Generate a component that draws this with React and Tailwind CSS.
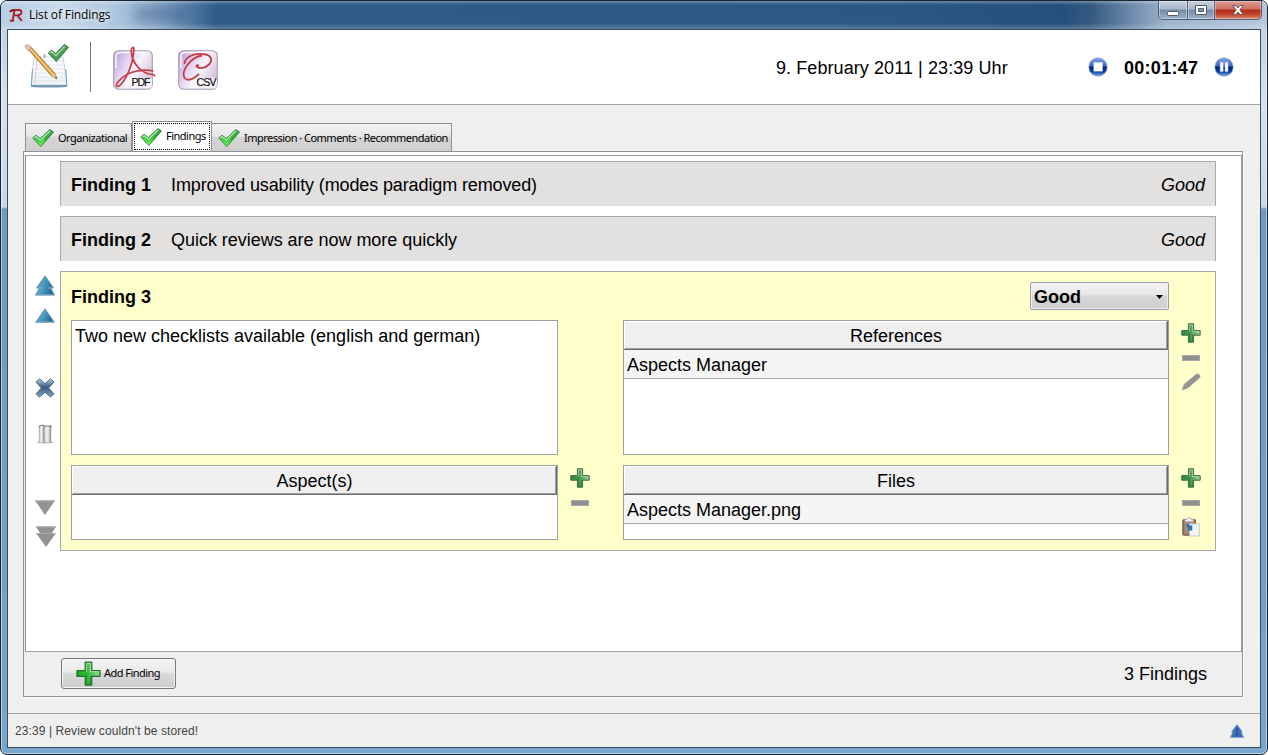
import React from "react";

function Check({ className }) {
  return (
    <svg className={className + " shrink-0"} viewBox="0 0 22 18">
      <defs>
        <linearGradient id="ck" x1="0" y1="0" x2="0" y2="1">
          <stop offset="0" stopColor="#4f9a57" />
          <stop offset="0.45" stopColor="#46b84a" />
          <stop offset="1" stopColor="#5dff52" />
        </linearGradient>
      </defs>
      <path d="M0.8 9 L4 6.2 L8.3 9.6 L17.8 0.6 L21.6 3 L8.8 17.6 Z" fill="url(#ck)" stroke="#1f7a2b" strokeWidth="0.8" strokeLinejoin="round" />
      <path d="M2.2 8.9 L4 7.5 L8.4 11.1 L17.9 2" fill="none" stroke="#c6f5c3" strokeWidth="1.1" opacity="0.9" />
      <path d="M13 9.5 L20.4 3.3 L12.8 12.2Z" fill="#168a1d" opacity="0.55" />
    </svg>
  );
}

function Plus({ className, bright }) {
  return (
    <svg className={className} viewBox="0 0 20 20">
      <defs>
        <linearGradient id={bright ? "pa" : "pb"} x1="0" y1="0.6" x2="1" y2="0.4">
          <stop offset="0" stopColor={bright ? "#13b012" : "#2e8a3a"} />
          <stop offset="0.45" stopColor={bright ? "#35bd38" : "#48974f"} />
          <stop offset="1" stopColor={bright ? "#92dd93" : "#a4cfa2"} />
        </linearGradient>
      </defs>
      <path d="M7.4 0.8 H12.6 V7.6 H19.2 V12.2 H12.6 V19.2 H7.4 V12.2 H0.8 V7.6 H7.4Z" fill={bright ? "url(#pa)" : "url(#pb)"} stroke={bright ? "#2a6b36" : "#3d6c41"} strokeWidth="1" strokeLinejoin="round" />
      <path d="M8.4 8.5 V1.9 H11.6 V8.5 H18" fill="none" stroke="#c2ecc0" strokeWidth="0.8" opacity="0.7" />
      <path d="M8.4 9.4 V18 H11.5 V12" fill="none" stroke="#107a20" strokeWidth="1" opacity="0.5" />
    </svg>
  );
}

function Minus({ className }) {
  return (
    <svg className={className} viewBox="0 0 18 6">
      <rect x="0.5" y="0.5" width="17" height="5" fill="#909090" stroke="#a5a5a5" />
    </svg>
  );
}

function Notepad() {
  return (
    <svg className="h-[46px] w-[46px]" viewBox="0 0 46 46">
      <defs>
        <linearGradient id="np" x1="0" y1="0" x2="0" y2="1">
          <stop offset="0" stopColor="#ffffff" />
          <stop offset="1" stopColor="#eef2f8" />
        </linearGradient>
      </defs>
      <path d="M10 13 H39 L43 41 H7Z" fill="url(#np)" stroke="#b6c7d6" strokeWidth="0.8" />
      <path d="M7 41 H43 V43 Q25 44 7 43Z" fill="#7298b3" />
      <path d="M8.5 25 L7.4 42 M41.8 25 L42.8 42" stroke="#6aa5c5" strokeWidth="1" />
      <path d="M11 17H39M10.5 21H40M10 25H40M9.5 29H41M9 33H41M9 37H41" stroke="#dcdfe9" strokeWidth="0.8" />
      <path d="M13 13 L11 40" stroke="#eab6c4" strokeWidth="0.8" />
      <path d="M20.5 10v4" stroke="#9ba3aa" strokeWidth="1.4" />
      <path d="M3.5 4.5 L6.5 2.5 L31 29.5 L33 35 L28 32.5Z" fill="#dba241" stroke="#8f631e" strokeWidth="0.7" />
      <path d="M5.5 4 L29.5 31" stroke="#ffe09a" strokeWidth="1.1" />
      <path d="M27.5 32.5 L31 29.5 L33 35Z" fill="#e8c79a" />
      <path d="M31 33 L32 32.2 L33.2 35.2Z" fill="#3b2c1c" />
      <path d="M1 3 Q1 0.3 4 0.7 L7.5 3.7 L4.2 6.7Z" fill="#efc3b1" stroke="#a28b82" strokeWidth="0.7" />
      <path d="M24.3 9 L27.6 6.3 L31.8 9.6 L40.2 0.6 L44.5 3.3 L32.3 17.6Z" fill="#4d9e57" stroke="#286c34" strokeWidth="0.9" strokeLinejoin="round" />
      <path d="M26 9 L27.8 7.8 L32 11.6 L40.6 2.4" fill="none" stroke="#b4dcb5" strokeWidth="1.2" />
    </svg>
  );
}

function DocTile({ label, children }) {
  return (
    <svg className="h-[46px] w-[46px]" viewBox="0 0 46 46">
      <defs>
        <linearGradient id="tile" x1="0" y1="0" x2="1" y2="0.5">
          <stop offset="0" stopColor="#b897d8" />
          <stop offset="0.35" stopColor="#e0cfee" />
          <stop offset="0.65" stopColor="#f8f4fa" />
          <stop offset="1" stopColor="#d9c6e2" />
        </linearGradient>
      </defs>
      <rect x="2.7" y="5.7" width="38.6" height="38.6" rx="5" fill="url(#tile)" stroke="#a79ab0" strokeWidth="1.1" />
      <path d="M5 23 V11 Q5 7.5 9 7.5 H34" fill="none" stroke="#fff" strokeWidth="1.5" opacity="0.9" />
      <path d="M14 43 L16 33 H41 V40 Q41 43.5 38 43.5Z" fill="#fff" opacity="0.75" />
      {children}
      <text x="20.5" y="41" fontFamily="Liberation Sans, Arial, sans-serif" fontSize="10.5" textLength={label === "PDF" ? 19 : 20} fill="#111" stroke="#111" strokeWidth="0.2">{label}</text>
    </svg>
  );
}

function Orb({ kind }) {
  return (
    <svg className="h-5 w-5" viewBox="0 0 20 20">
      <defs>
        <linearGradient id="orb" x1="0" y1="0" x2="0" y2="1">
          <stop offset="0" stopColor="#87a7e4" />
          <stop offset="0.45" stopColor="#3a63c4" />
          <stop offset="0.5" stopColor="#05256f" />
          <stop offset="0.75" stopColor="#0a3c9e" />
          <stop offset="1" stopColor="#7db4f5" />
        </linearGradient>
      </defs>
      <circle cx="10" cy="10" r="9.2" fill="url(#orb)" stroke="#7e9ad0" strokeWidth="0.6" />
      {kind === "stop" ? (
        <rect x="5.6" y="5.4" width="9" height="9" fill="#fff" />
      ) : (
        <path d="M6.2 5.2h3v9.4h-3zM11 5.2h3v9.4h-3z" fill="#fff" stroke="#b8c9ee" strokeWidth="0.5" />
      )}
    </svg>
  );
}

function Up({ double, className }) {
  return (
    <svg className={className} viewBox={double ? "0 0 20 21" : "0 0 20 15"}>
      <defs>
        <linearGradient id="upg" x1="0" y1="0" x2="1" y2="0.4">
          <stop offset="0" stopColor="#7899a7" />
          <stop offset="0.5" stopColor="#4d9fc4" />
          <stop offset="1" stopColor="#286a98" />
        </linearGradient>
      </defs>
      <path
        d={double ? "M10 0.8 L18.6 13 H15.6 L19.5 20 H0.5 L4.4 13 H1.4Z" : "M10 0.8 L19.3 14.2 H0.7Z"}
        fill="url(#upg)" stroke="#6793ad" strokeWidth="0.9" />
      <path d={double ? "M0.5 20H19.5M2 13H7M13 13H18" : "M0.5 14.2H19.5"} stroke="#8faac5" strokeWidth="1" />
    </svg>
  );
}

function Down({ double, className }) {
  return (
    <svg className={className} viewBox={double ? "0 0 20 21" : "0 0 20 15"}>
      <path d={double ? "M0 0.5H20L16 7H20L10 21L0 7H4Z" : "M0 0.5H20L10 15Z"} fill="#929292" />
      <path d={double ? "M0 1H20M1 7.5H19" : "M0 1H20"} stroke="#aaaaaa" strokeWidth="1" />
    </svg>
  );
}

function Cross() {
  return (
    <svg className="h-5 w-5" viewBox="0 0 20 20">
      <defs>
        <linearGradient id="xg" x1="0" y1="0" x2="0" y2="1">
          <stop offset="0" stopColor="#c3d6e3" />
          <stop offset="0.45" stopColor="#35587c" />
          <stop offset="1" stopColor="#86a8c6" />
        </linearGradient>
      </defs>
      <path d="M4.5 0.9 L10 5.6 L15.5 0.9 L19 4.1 L13.6 10 L19 15.8 L15.5 19 L10 14.3 L4.5 19 L1 15.8 L6.4 10 L1 4.1Z" fill="url(#xg)" stroke="#476985" strokeWidth="1" strokeLinejoin="round" />
    </svg>
  );
}

function Bin() {
  return (
    <svg className="h-5 w-[18px]" viewBox="0 0 18 20">
      <defs>
        <linearGradient id="bin" x1="0" y1="0" x2="1" y2="0">
          <stop offset="0" stopColor="#9b9b9b" />
          <stop offset="0.2" stopColor="#fff" />
          <stop offset="0.4" stopColor="#9a9a9a" />
          <stop offset="0.6" stopColor="#f4f4f4" />
          <stop offset="0.8" stopColor="#dedede" />
          <stop offset="1" stopColor="#777" />
        </linearGradient>
      </defs>
      <ellipse cx="9" cy="18.3" rx="8" ry="1.1" fill="#aaa" />
      <path d="M2.8 2 H15.2 L15 18.5 H3Z" fill="url(#bin)" />
      <path d="M2.8 3 L3.4 2 L7 1 L8 2 H15.2 V3" fill="none" stroke="#555" strokeWidth="0.8" />
    </svg>
  );
}

function Pencil() {
  return (
    <svg className="h-[18px] w-[20px]" viewBox="0 0 20 18">
      <path d="M1 17 L3.2 11.2 L15.2 1.2 Q17 0.2 18.6 2 Q19.8 3.6 18.5 4.8 L6.8 15.1Z" fill="#919191" stroke="#a9a9a4" strokeWidth="0.7" />
      <path d="M3.2 11.2 L6.8 15.1" stroke="#b5b5b5" strokeWidth="0.7" />
    </svg>
  );
}

function Clipboard() {
  return (
    <svg className="h-5 w-[18px]" viewBox="0 0 18 20">
      <rect x="0.8" y="2.6" width="12.8" height="15.6" rx="1" fill="#977363" stroke="#765447" />
      <path d="M2.5 4H12V17H2.5Z" fill="#ad8b79" />
      <path d="M3 4.7 V2.2 H5.2 Q5.2 0.5 7.2 0.5 Q9.2 0.5 9.2 2.2 H11.2 V4.7Z" fill="#eee" stroke="#aaa" strokeWidth="0.7" />
      <path d="M7.5 6.8 H17.3 V19 H7.5Z" fill="#f3f4f8" stroke="#b6b8bf" strokeWidth="0.7" />
      <path d="M3.6 8 L6 6.5 L8.4 9 L10.3 7.4 V13.4 H4.8 L6.6 11.3Z" fill="#2776a8" />
    </svg>
  );
}

function Logo() {
  return (
    <svg className="h-[13px] w-[14px]" viewBox="0 0 14 13">
      <path d="M1 3.2 Q2 1 5 1 H10 Q13 1.2 12.3 4 Q11.8 6 8.5 6.4 L12.8 11.8 M5.5 1.5 L3.6 11.5 M0.8 11.8 H5 M5 6.4 H8.5" fill="none" stroke="#b01f28" strokeWidth="1.9" />
      <path d="M1 3 Q2 1 5 0.8" fill="none" stroke="#4b1a1e" strokeWidth="1" />
    </svg>
  );
}

function TitleBar() {
  return (
    <div className="flex h-[29px] items-start bg-[linear-gradient(180deg,rgba(255,255,255,0.3)_0px,rgba(255,255,255,0)_4px,rgba(0,0,0,0)_22px,rgba(255,255,255,0.22)_28px),linear-gradient(90deg,#b9cfe6_0px,#c6d8ea_60px,#a9c2db_120px,#7698bb_165px,#4a739e_195px,#2e5b88_215px,#2c5988_600px,#2a5784_900px,#254f7c_1060px,#34597f_1090px,#6c8aab_1130px,#9db4cc_1165px,#b6c9dd_1268px)]">
      <div className="mt-[8px] ml-[8px]"><Logo /></div>
      <span className="mt-[5px] ml-[6px] w-[90px] shrink-0 font-['Open_Sans',sans-serif] text-[12px] leading-[18px] tracking-[-0.12px] whitespace-nowrap text-black [text-shadow:0_0_8px_#fff,0_0_5px_#fff]">List of Findings</span>
      <div className="mt-[8px] ml-4 h-[10px] w-[52px] bg-[#35577c]/35 blur-[4px]" />
      <div className="mr-[5px] ml-auto flex h-[19px] overflow-hidden rounded-b-[5px] border border-t-0 border-[#4d5d73] bg-[#4d5d73]">
        <div className="flex w-[28px] items-center justify-center bg-[linear-gradient(180deg,#c7d1df,#a9b8cb_45%,#7189a6_50%,#9eb3ca)] shadow-[inset_0_0_0_1px_rgba(255,255,255,0.4)]">
          <svg className="mt-[6px] h-[5px] w-3" viewBox="0 0 12 5"><rect x="0.5" y="0.5" width="11" height="4" rx="1" fill="#fff" stroke="#535b6b" /></svg>
        </div>
        <div className="ml-px flex w-[26px] items-center justify-center bg-[linear-gradient(180deg,#c7d1df,#a9b8cb_45%,#7189a6_50%,#9eb3ca)] shadow-[inset_0_0_0_1px_rgba(255,255,255,0.4)]">
          <svg className="h-[10px] w-3" viewBox="0 0 12 10"><path d="M0.5 0.5h11v9H0.5zM3.5 3.5v3h5v-3z" fillRule="evenodd" fill="#fff" stroke="#535b6b" /></svg>
        </div>
        <div className="ml-px flex w-[46px] items-center justify-center bg-[linear-gradient(180deg,#dd9c92,#cd6f61_45%,#b42c18_50%,#c1452d_75%,#d98c72)] shadow-[inset_0_0_0_1px_rgba(255,255,255,0.35)]">
          <svg className="h-[10px] w-3" viewBox="0 0 12 10"><path d="M0.7 0.6H4L6 2.9L8 0.6H11.3L7.8 5L11.3 9.4H8L6 7.1L4 9.4H0.7L4.2 5Z" fill="#fff" stroke="#5a4a55" strokeWidth="0.9" /></svg>
        </div>
      </div>
    </div>
  );
}

function Toolbar() {
  return (
    <div className="flex h-[75px] shrink-0 items-start border-b border-[#a5a5a5] bg-white">
      <div className="mt-[14px] ml-4"><Notepad /></div>
      <div className="mt-3 ml-5 h-[50px] w-px bg-[#777]" />
      <div className="mt-[15px] ml-[20px]">
        <DocTile label="PDF">
          <path d="M22 2.5 Q19.5 3 20.5 9 C22 19 31 29 42 29.5 Q44 30.5 43.5 31.5 M42.5 26 C28 23 14 28 7 37 Q4 41 6 41.5 C11 42 21 24 22.5 8 Q23.5 2 22 2.5" fill="none" stroke="#c43d49" strokeWidth="1.7" />
        </DocTile>
      </div>
      <div className="mt-[15px] ml-[19px]">
        <DocTile label="CSV">
          <path d="M8.5 19 C8.5 12 17 8.5 26 9 C35 9 37.5 15 33 19.5 C29 23.5 23 24 20.5 21.5 Q20 19.5 23 20.5 M26 10.5 C15 12 4.5 26 8.5 33 Q13 38 23 29" fill="none" stroke="#c43d49" strokeWidth="1.8" />
        </DocTile>
      </div>
      <div className="mt-[26px] mr-[80px] ml-auto w-[232px] text-[18px] leading-6 tracking-[0.08px] whitespace-nowrap">9. February 2011 | 23:39 Uhr</div>
      <div className="mt-[27px]"><Orb kind="stop" /></div>
      <div className="mt-[26px] ml-4 w-[74px] text-[18px] leading-6 font-bold tracking-[0.28px] whitespace-nowrap">00:01:47</div>
      <div className="mt-[27px] mr-[26px] ml-4"><Orb kind="pause" /></div>
    </div>
  );
}

const tabFont = "font-['Noto_Sans',sans-serif] text-[11px] whitespace-nowrap text-black";

function Tabs() {
  return (
    <div className="mt-[16px] ml-[2px] flex h-[30px] items-end">
      <div className="flex h-[28px] w-[107px] items-center border border-b-0 border-[#8e8f99] bg-[linear-gradient(180deg,#f4f4f4,#e6e6e6_45%,#d5d5d5_50%,#cfcfcf)] pt-px pl-[6px]">
        <Check className="h-[18px] w-[22px]" />
        <span className={tabFont + " ml-1 tracking-[-0.5px]"}>Organizational</span>
      </div>
      <div className="h-[30px] w-[80px] border border-b-0 border-[#8e8f99] bg-white p-px pb-0">
        <div className="flex h-[27px] items-center border border-dotted border-black pl-[5px]">
          <Check className="h-[18px] w-[22px]" />
          <span className={tabFont + " ml-1 tracking-[-0.5px]"}>Findings</span>
        </div>
      </div>
      <div className="flex h-[28px] w-[240px] items-center border border-b-0 border-l-0 border-[#8e8f99] bg-[linear-gradient(180deg,#f4f4f4,#e6e6e6_45%,#d5d5d5_50%,#cfcfcf)] pt-px pl-[6px]">
        <Check className="h-[18px] w-[22px]" />
        <span className={tabFont + " ml-1 tracking-[-0.52px]"}>Impression · Comments · Recommendation</span>
      </div>
    </div>
  );
}

function FindingRow({ n, text, textClass }) {
  return (
    <div className="mb-[10px] flex h-[45px] items-center border-t border-r border-l border-[#a9a9a9] bg-[#e3e1e0] px-[10px] pt-[2px] text-[18px]">
      <span className="w-[100px] font-bold">Finding {n}</span>
      <span className={"whitespace-nowrap " + textClass}>{text}</span>
      <span className="ml-auto italic">Good</span>
    </div>
  );
}

function Table({ title, item, className }) {
  return (
    <div className={"border border-[#a0a0a0] bg-white text-[18px] " + className}>
      <div className="flex h-[29px] items-center justify-center border-r border-b border-[#6b6b6e] bg-[#efefef] pt-[3px] pl-px shadow-[inset_1px_1px_0_#fff,inset_-1px_-1px_0_#a0a0a2]">{title}</div>
      {item && <div className="flex h-[29px] items-center border-b border-[#a9a9a9] bg-[#f5f5f5] pt-[2px] pl-[3px]">{item}</div>}
    </div>
  );
}

function ActiveFinding() {
  return (
    <div className="h-[280px] border border-[#a9a9a9] bg-[#ffffcc] pl-[10px]">
      <div className="flex h-[48px] items-start text-[18px] font-bold">
        <span className="mt-[13px] leading-6">Finding 3</span>
        <div className="mt-[10px] mr-[46px] ml-auto flex h-[28px] w-[139px] items-center justify-between rounded-[2px] border border-[#9b9da9] bg-[linear-gradient(180deg,#f3f3f3,#e7e7e7_45%,#d8d8d8_50%,#cecece)] pr-[5px] pl-[3px] shadow-[inset_0_0_0_1px_#eeeeee]">
          <span className="pt-[3px]">Good</span>
          <svg className="mt-px h-1 w-[7px]" viewBox="0 0 7 4"><path d="M0 0H7L3.5 4Z" fill="#000" /></svg>
        </div>
      </div>
      <div className="flex">
        <div className="h-[135px] w-[487px] border border-[#a0a0a0] bg-white pt-[3px] pl-[3px] text-[18px] leading-6">Two new checklists available (english and german)</div>
        <Table title="References" item="Aspects Manager" className="ml-[65px] h-[135px] w-[546px]" />
        <div className="ml-3 flex flex-col items-center">
          <Plus className="mt-[3px] h-5 w-5" />
          <Minus className="mt-3 h-[6px] w-[18px]" />
          <div className="mt-[12px]"><Pencil /></div>
        </div>
      </div>
      <div className="mt-[10px] flex">
        <Table title="Aspect(s)" className="h-[75px] w-[487px]" />
        <div className="ml-[12px] flex w-[53px] flex-col items-start">
          <Plus className="mt-[3px] h-5 w-5" />
          <Minus className="mt-3 ml-px h-[6px] w-[18px]" />
        </div>
        <Table title="Files" item="Aspects Manager.png" className="h-[75px] w-[546px]" />
        <div className="ml-3 flex flex-col items-center">
          <Plus className="mt-[3px] h-5 w-5" />
          <Minus className="mt-3 h-[6px] w-[18px]" />
          <div className="mt-[11px]"><Clipboard /></div>
        </div>
      </div>
    </div>
  );
}

function Rail() {
  return (
    <div className="flex w-[34px] flex-col items-center pt-[119px] pl-[4px]">
      <Up double className="h-[21px] w-5" />
      <Up className="mt-[12px] h-[15px] w-5" />
      <div className="mt-[55px]"><Cross /></div>
      <div className="mt-[26px]"><Bin /></div>
      <Down className="mt-[56px] h-[15px] w-5" />
      <Down double className="mt-[11px] ml-[2px] h-[21px] w-5" />
    </div>
  );
}

export default function App() {
  return (
    <div className="h-[755px] w-[1268px] overflow-hidden bg-white font-['Liberation_Sans',Arial,sans-serif] text-black">
      <div className="flex h-[755px] flex-col overflow-hidden rounded-[7px] border border-[#1b2530] bg-[linear-gradient(180deg,#b8cde3_0px,#d5e1ee_100px,#c7d8e9_206px,#719ac1_208px,#76a0c8_600px,#78a6cd_755px)] shadow-[inset_0_0_0_1px_rgba(255,255,255,0.5)]">
        <TitleBar />
        <div className="-mt-px mr-[6px] ml-[6px] flex h-[719px] flex-col border border-[#3c4c5e] bg-[#efefef]">
          <Toolbar />
          <div className="ml-[15px] h-[592px] w-[1220px]">
            <Tabs />
            <div className="h-[546px] border border-[#8e8f99] border-r-[#8e8f99] bg-[#efefef] shadow-[1px_1px_0_#fff]">
              <div className="h-[3px] bg-white" />
              <div className="ml-px flex h-[497px] border border-[#a0a0a0] border-l-[#8e8f99] bg-white">
                <Rail />
                <div className="w-[1156px] pt-[5px]">
                  <FindingRow n={1} text="Improved usability (modes paradigm removed)" textClass="tracking-[-0.12px]" />
                  <FindingRow n={2} text="Quick reviews are now more quickly" textClass="tracking-[-0.03px]" />
                  <ActiveFinding />
                </div>
              </div>
              <div className="flex h-[43px] items-center justify-between pr-[35px] pl-[37px]">
                <div className="flex h-[31px] w-[115px] items-center rounded-[3px] border border-[#77777a] bg-[linear-gradient(180deg,#f4f4f4,#e9e9e9_45%,#d9d9d9_50%,#cdcdcd)] pl-[14px] shadow-[inset_0_0_0_1px_#f3f3f3]">
                  <Plus bright className="h-[25px] w-[25px]" />
                  <span className={tabFont + " ml-[3px] tracking-[-0.55px]"}>Add Finding</span>
                </div>
                <span className="pt-[2px] text-[18px]">3 Findings</span>
              </div>
            </div>
          </div>
          <div className="mt-[16px] flex h-[34px] shrink-0 items-center justify-between border-t border-[#a5a5a5] pr-[16px] pl-[7px]">
            <span className="text-[12px] tracking-[0.09px] text-[#444]">23:39 | Review couldn't be stored!</span>
            <svg className="h-[14px] w-[14px]" viewBox="0 0 14 14"><path d="M7 0.5L12.5 8H11.2L13.7 13.5H0.3L2.8 8H1.5Z" fill="#3b70b8" stroke="#7c9ed0" strokeWidth="0.6" /><path d="M7 4V13" stroke="#244f96" strokeWidth="1.3" /></svg>
          </div>
        </div>
      </div>
    </div>
  );
}
